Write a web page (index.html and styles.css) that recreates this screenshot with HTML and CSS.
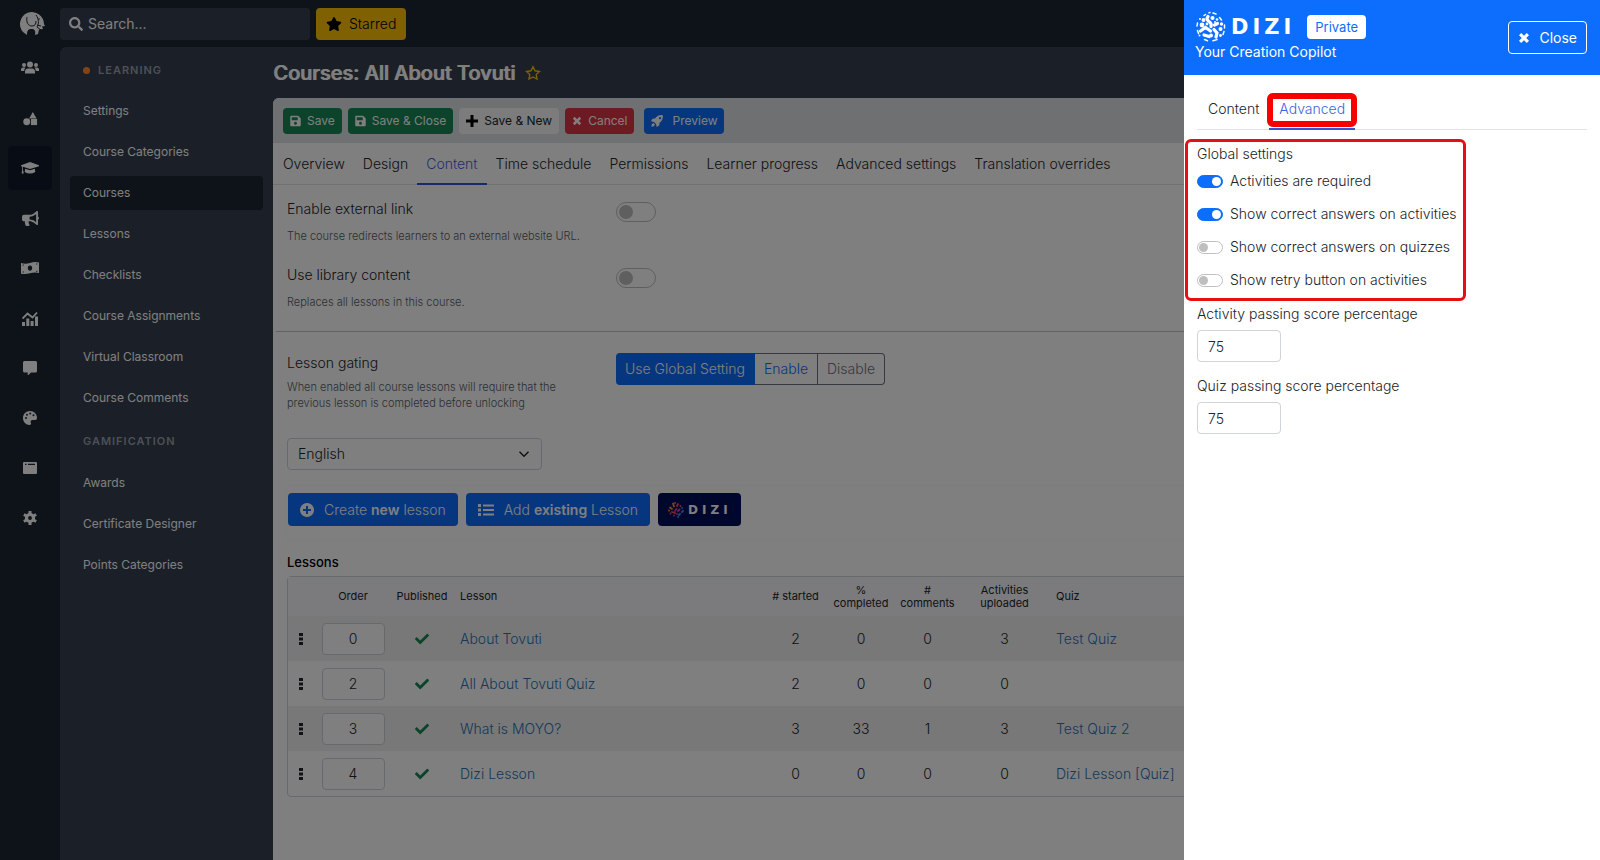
FILE: index.html
```
<!DOCTYPE html>
<html lang="en">

<head>
  <meta charset="UTF-8" />
  <meta name="viewport" content="width=device-width, initial-scale=1.0" />
  <title>Courses: All About Tovuti</title>
  <link rel="stylesheet" href="styles.css">
</head>

<body>
  <!-- Shared icons -->
  <svg class="sprite" aria-hidden="true">
    <symbol id="i-save" viewBox="0 0 448 512"><path d="M433.941 129.941l-83.882-83.882A48 48 0 0 0 316.118 32H48C21.49 32 0 53.49 0 80v352c0 26.51 21.49 48 48 48h352c26.51 0 48-21.49 48-48V163.882a48 48 0 0 0-14.059-33.941zM224 416c-35.346 0-64-28.654-64-64 0-35.346 28.654-64 64-64s64 28.654 64 64c0 35.346-28.654 64-64 64zm96-304.52V212c0 6.627-5.373 12-12 12H76c-6.627 0-12-5.373-12-12V108c0-6.627 5.373-12 12-12h228.52c3.183 0 6.235 1.264 8.485 3.515l3.48 3.48A11.996 11.996 0 0 1 320 111.48z"/></symbol>
    <symbol id="i-check" viewBox="0 0 512 512"><path d="M173.898 439.404l-166.4-166.4c-9.997-9.997-9.997-26.206 0-36.204l36.203-36.204c9.997-9.998 26.207-9.998 36.204 0L192 312.69 432.095 72.596c9.997-9.997 26.207-9.997 36.204 0l36.203 36.204c9.997 9.997 9.997 26.206 0 36.204l-294.4 294.401c-9.998 9.997-26.207 9.997-36.204-.001z"/></symbol>
    <symbol id="i-times" viewBox="0 0 12 12"><path d="M3.2 1L6 3.8 8.800 1 11 3.200 8.200 6 11 8.800 8.800 11 6 8.200 3.200 11 1 8.800 3.800 6 1 3.200z"/></symbol>
    <symbol id="i-star" viewBox="0 0 576 512"><path d="M259.3 17.8L194 150.2 47.9 171.5c-26.2 3.8-36.7 36.1-17.7 54.6l105.7 103-25 145.5c-4.5 26.3 23.2 46 46.4 33.7L288 439.6l130.7 68.700c23.2 12.2 50.9-7.4 46.4-33.7l-25-145.5 105.700-103c19-18.5 8.5-50.8-17.7-54.600L382 150.2 316.7 17.8c-11.7-23.6-45.6-23.9-57.4 0z"/></symbol>
    <symbol id="i-grip" viewBox="0 0 4 12"><rect width="4" height="3"/><rect y="4.500" width="4" height="3"/><rect y="9" width="4" height="3"/></symbol>
    <symbol id="i-globe" viewBox="0 0 32 32">
      <g fill="none" stroke="currentColor" stroke-linecap="round">
        <path stroke-width="3.200" d="M13 5.500q-2 3 1 5t2 5M5.500 20l5-3.500 5 3.500M19 18.500l3 3.500-1 4M22.500 12.500l-3 1.500M9 24l5 1.500"/>
        <path stroke-width="1.500" d="M9 4.500l1.500-1M18 2l3 1M24.500 6.500l2 2.500M29.500 14v3M29 20.500l-1 3M2.500 12l-.5 3M2.500 19.500l1 3M18 29.800l4-1.200M9.500 28.500l3 1.200M14 1.800l1-.2"/>
      </g>
      <circle cx="17.500" cy="7" r="2"/><circle cx="22" cy="8.500" r="1.300"/><circle cx="26.500" cy="13" r="1.700"/>
      <circle cx="8.500" cy="9" r="2"/><circle cx="7" cy="14" r="2.400"/><circle cx="12" cy="13" r="1.400"/>
      <circle cx="25.500" cy="18" r="2"/><circle cx="16" cy="24.500" r="2"/><circle cx="25.500" cy="24.500" r="1.400"/>
      <circle cx="5" cy="8" r="1"/><circle cx="4.500" cy="24.500" r="1"/><circle cx="20" cy="11" r="1"/>
    </symbol>
  </svg>

  <div class="app">
    <!-- Icon rail -->
    <nav class="rail" aria-label="Main">
      <a class="brand" href="#" aria-label="Home">
        <svg viewBox="0 0 26 26" width="26" height="26">
          <path d="M4 22A12 12 0 1 1 25 14l1 2-3 .5 1 2.500-4 .5-1 4.500-3 1c1-5-1-6-4-6s-4 2-4 6z"/>
          <path d="M8 7c-1 5 1 9 5 9 3 0 4-2 4-5M17 5c3 4 3 9 1 12l4 3M18 15l4 1" fill="none" stroke="#1c2634" stroke-width="1"/>
          <circle cx="20" cy="9" r=".8" fill="#1c2634"/>
        </svg>
      </a>
      <a class="rail-link" href="#" aria-label="Users">
        <svg viewBox="0 0 18 14" width="18" height="14"><circle cx="9" cy="3.500" r="3"/><path d="M4 12.500V11q0-3.500 3-3.500h4q3 0 3 3.500v1.500z"/><circle cx="3" cy="4" r="2"/><circle cx="15" cy="4" r="2"/><path d="M0 10V8.500Q0 6.600 2 6.600h2.500Q3.300 8 3.200 10zM18 10V8.500q0-1.900-2-1.900h-2.500q1.200 1.400 1.300 3.400z"/></svg>
      </a>
      <a class="rail-link" href="#" aria-label="Shapes">
        <svg viewBox="0 0 16 16" width="15" height="15"><path d="M10.500 1l4 7h-8z"/><circle cx="4" cy="11.500" r="3.700"/><rect x="8.500" y="8.500" width="6.500" height="6.500"/></svg>
      </a>
      <a class="rail-link active" href="#" aria-label="Learning">
        <svg viewBox="0 0 18 14" width="18" height="14"><path d="M9 1l9 3.200v1L9 8 2 5.800v3l.8 3.700H.6l.6-3.700V5.500L0 5.200v-1z"/><path d="M4.200 7.800L9 9.300l4.800-1.500.5 3.200q-5.300 3.200-10.600 0z"/></svg>
      </a>
      <a class="rail-link" href="#" aria-label="Announcements">
        <svg viewBox="0 0 576 512" width="17" height="15"><path d="M576 240c0-23.630-12.950-44.040-32-55.120V32.010C544 23.260 537.020 0 512 0c-7.120 0-14.190 2.380-19.980 7.020l-85.030 68.030C364.280 109.190 310.660 128 256 128H64c-35.350 0-64 28.650-64 64v96c0 35.350 28.650 64 64 64h33.700c-1.390 10.480-2.180 21.140-2.180 32 0 39.770 9.260 77.350 25.560 110.940 5.190 10.690 16.520 17.060 28.400 17.060h74.280c26.050 0 41.690-29.840 25.900-50.560-16.400-21.520-26.150-48.360-26.150-77.440 0-11.110 1.620-21.790 4.410-32H256c54.660 0 108.280 18.810 150.980 52.950l85.030 68.030a32.023 32.023 0 0 0 19.980 7.020c24.920 0 32-22.780 32-32V295.130C563.050 284.040 576 263.630 576 240zm-96 141.420l-33.050-26.440C392.950 311.780 325.120 288 256 288v-96c69.120 0 136.950-23.780 190.950-66.980L480 98.580v282.840z"/></svg>
      </a>
      <a class="rail-link" href="#" aria-label="Commerce">
        <svg viewBox="0 0 18 14" width="18" height="14"><path fill-rule="evenodd" d="M0 2q4.500 1.500 9 0t9-.5v10.500q-4.500-1-9 .3t-9 .4zM9 4.500c-1.500 0-2.200 1.200-2.200 2.600S7.500 9.700 9 9.700s2.200-1.200 2.200-2.600S10.500 4.500 9 4.500z"/><path d="M1.500 4.500l1.500-.8M15 3h1.500M1.500 11h1.500M15 10.500l1.500-.3" stroke="#1c2634" stroke-width=".8"/></svg>
      </a>
      <a class="rail-link" href="#" aria-label="Reports">
        <svg viewBox="0 0 16 15" width="16" height="15"><path d="M0 11h3v4H0zM4.300 7.500h3V15h-3zM8.600 10h3v5h-3zM13 5.500h3V15h-3z"/><path d="M.5 7.500l5-5 5 4 4.500-5" fill="none" stroke="currentColor" stroke-width="1.800"/></svg>
      </a>
      <a class="rail-link" href="#" aria-label="Messages">
        <svg viewBox="0 0 14 14" width="14" height="14"><path d="M1.500 0h11Q14 0 14 1.500v8.500q0 1.500-1.500 1.500H8L5.500 14h-.8v-2.500H1.500Q0 11.500 0 10V1.500Q0 0 1.500 0z"/></svg>
      </a>
      <a class="rail-link" href="#" aria-label="Design">
        <svg viewBox="0 0 14 14" width="14" height="14"><path fill-rule="evenodd" d="M7 0C3 0 0 3.200 0 7s3 7 6.500 7c1.500 0 1.800-1 1.300-2.200C7.200 10.300 8 9 9.500 9H12c1.300 0 2-.9 2-2 0-4-3-7-7-7zM2 7a1 1 0 1 0 2 0 1 1 0 1 0-2 0zM3 3.800a1 1 0 1 0 2 0 1 1 0 1 0-2 0zM6.200 2.500a1 1 0 1 0 2 0 1 1 0 1 0-2 0zM9.500 4.200a1 1 0 1 0 2 0 1 1 0 1 0-2 0z"/></svg>
      </a>
      <a class="rail-link" href="#" aria-label="Pages">
        <svg viewBox="0 0 14 12" width="14" height="12"><path fill-rule="evenodd" d="M1 0h12q1 0 1 1v10q0 1-1 1H1q-1 0-1-1V1q0-1 1-1zM2 1.800V3h1.500V1.800zM5 1.800V3h7V1.800z"/></svg>
      </a>
      <a class="rail-link" href="#" aria-label="Configuration">
        <svg viewBox="0 0 14 14" width="14" height="14"><circle cx="7" cy="7" r="3.500" fill="none" stroke="currentColor" stroke-width="3.200"/><path d="M7 0v3M7 11v3M.9 3.500l2.600 1.500M10.500 9l2.600 1.500M.9 10.500L3.500 9M10.500 5l2.600-1.500" stroke="currentColor" stroke-width="3"/></svg>
      </a>
    </nav>

    <div class="page">
      <!-- Top bar -->
      <header class="topbar">
        <label class="search">
          <svg viewBox="0 0 512 512" width="14" height="14"><path d="M505 442.700L405.300 343c-4.500-4.500-10.600-7-17-7H372c27.600-35.300 44-79.700 44-128C416 93.100 322.900 0 208 0S0 93.100 0 208s93.100 208 208 208c48.300 0 92.700-16.400 128-44v16.300c0 6.400 2.500 12.500 7 17l99.700 99.700c9.400 9.400 24.600 9.400 33.900 0l28.300-28.300c9.400-9.400 9.400-24.600.1-34zM208 336c-70.700 0-128-57.200-128-128 0-70.700 57.200-128 128-128 70.700 0 128 57.200 128 128 0 70.700-57.200 128-128 128z"/></svg>
          <input type="text" placeholder="Search..." aria-label="Search" />
        </label>
        <button class="btn btn-starred" type="button">
          <svg width="16" height="14"><use href="#i-star"/></svg>
          Starred
        </button>
      </header>

      <div class="workspace">
        <!-- Sidebar -->
        <aside class="sidebar">
          <h2 class="side-title"><span class="dot"></span>Learning</h2>
          <a class="side-link" href="#">Settings</a>
          <a class="side-link" href="#">Course Categories</a>
          <a class="side-link active" href="#">Courses</a>
          <a class="side-link" href="#">Lessons</a>
          <a class="side-link" href="#">Checklists</a>
          <a class="side-link" href="#">Course Assignments</a>
          <a class="side-link" href="#">Virtual Classroom</a>
          <a class="side-link" href="#">Course Comments</a>
          <h2 class="side-title muted">Gamification</h2>
          <a class="side-link" href="#">Awards</a>
          <a class="side-link" href="#">Certificate Designer</a>
          <a class="side-link" href="#">Points Categories</a>
        </aside>

        <main class="main">
          <div class="page-title">
            <h1>Courses: All About Tovuti</h1>
            <svg viewBox="-40 -40 656 592" width="16" height="15"><path class="star-outline" d="M288 20l82 166 184 27-133 129 31 182-164-86-164 86 31-182L22 213l184-27z"/></svg>
          </div>

          <div class="card">
            <div class="toolbar">
              <button class="btn btn-success" type="button"><svg width="11" height="12"><use href="#i-save"/></svg>Save</button>
              <button class="btn btn-success" type="button"><svg width="11" height="12"><use href="#i-save"/></svg>Save &amp; Close</button>
              <button class="btn btn-light" type="button"><svg viewBox="0 0 12 12" width="12" height="12"><path d="M4.500 0h3v4.500H12v3H7.500V12h-3V7.500H0v-3h4.500z"/></svg>Save &amp; New</button>
              <button class="btn btn-danger" type="button"><svg width="10" height="10"><use href="#i-times"/></svg>Cancel</button>
              <button class="btn btn-primary preview" type="button"><svg viewBox="0 0 12 12" width="12" height="12"><path fill-rule="evenodd" d="M11.800.2Q12.500 4.800 8.500 8L8.200 10.500 5.700 12 5 9 3 7 0 6.300 1.500 3.800 4 3.500Q7.200-.5 11.800.2zM9 2a1.100 1.100 0 1 0 .1 0z"/><path d="M.3 11.700Q.3 8.500 2.300 8l1.700 1.700q-.5 2-3.700 2z"/></svg>Preview</button>
            </div>

            <nav class="tabs">
              <a href="#">Overview</a>
              <a href="#">Design</a>
              <a class="active" href="#">Content</a>
              <a href="#">Time schedule</a>
              <a href="#">Permissions</a>
              <a href="#">Learner progress</a>
              <a href="#">Advanced settings</a>
              <a href="#">Translation overrides</a>
            </nav>

            <div class="card-body">
              <div class="setting">
                <div class="setting-text">
                  <label for="external-link">Enable external link</label>
                  <p>The course redirects learners to an external website URL.</p>
                </div>
                <input class="switch switch-lg" id="external-link" type="checkbox" />
              </div>
              <div class="setting">
                <div class="setting-text">
                  <label for="library-content">Use library content</label>
                  <p>Replaces all lessons in this course.</p>
                </div>
                <input class="switch switch-lg" id="library-content" type="checkbox" />
              </div>
              <hr>
              <div class="setting gating">
                <div class="setting-text">
                  <span>Lesson gating</span>
                  <p>When enabled all course lessons will require that the previous lesson is completed before unlocking</p>
                </div>
                <div class="btn-group" role="group" aria-label="Lesson gating">
                  <button class="selected" type="button">Use Global Setting</button>
                  <button class="enable" type="button">Enable</button>
                  <button type="button">Disable</button>
                </div>
              </div>

              <div class="language">
                <select aria-label="Language">
                  <option>English</option>
                </select>
                <svg viewBox="0 0 16 16" width="12" height="12"><path d="M2 5l6 6 6-6" fill="none" stroke="currentColor" stroke-width="2"/></svg>
              </div>

              <div class="lesson-actions">
                <button class="btn btn-primary btn-lg" type="button">
                  <svg viewBox="0 0 14 14" width="14" height="14"><path fill-rule="evenodd" d="M7 0a7 7 0 1 0 .01 0zM6 3h2v3h3v2H8v3H6V8H3V6h3z"/></svg>
                  <span>Create <b>new</b> lesson</span>
                </button>
                <button class="btn btn-primary btn-lg" type="button">
                  <svg viewBox="0 0 16 14" width="16" height="14"><path d="M0 1h3v3H0zM0 5.500h3v3H0zM0 10h3v3H0zM5 1.500h11v2H5zM5 6h11v2H5zM5 10.500h11v2H5z"/></svg>
                  <span>Add <b>existing</b> Lesson</span>
                </button>
                <button class="btn btn-dizi" type="button">
                  <svg viewBox="0 0 18 18" width="18" height="18">
                    <g stroke-width="1.800" stroke-linecap="round" fill="none">
                      <path d="M6 2.500l1 3M3 6.500l2 1.500M8 2v.1M2 9.500h.1" stroke="#ff8a30"/>
                      <path d="M11 3l-1 2M13.500 5v.1M5 11l3 1M3.500 12.500v.1" stroke="#ff4d5a"/>
                      <path d="M9.500 8l-1.500 2M12.500 8.500l-1.500 1.500M10 13v.1M7 14.500v.1" stroke="#e040a0"/>
                      <path d="M15 7v.1M16 10l-1 1M13 13l-1 1M11 16v.1" stroke="#4c8dff"/>
                    </g>
                  </svg>
                  <span class="wordmark">DIZI</span>
                </button>
              </div>

              <h3>Lessons</h3>
              <table class="lessons">
                <colgroup>
                  <col class="c-grip"><col class="c-order"><col class="c-published"><col class="c-lesson"><col class="c-started"><col class="c-completed"><col class="c-comments"><col class="c-uploaded"><col>
                </colgroup>
                <thead>
                  <tr>
                    <th></th>
                    <th>Order</th>
                    <th>Published</th>
                    <th class="left">Lesson</th>
                    <th># started</th>
                    <th>% completed</th>
                    <th># comments</th>
                    <th>Activities uploaded</th>
                    <th class="left">Quiz</th>
                  </tr>
                </thead>
                <tbody>
                  <tr>
                    <td><svg width="4" height="12"><use href="#i-grip"/></svg></td>
                    <td><input type="text" value="0" aria-label="Order of About Tovuti" /></td>
                    <td><svg class="check" width="14" height="14"><use href="#i-check"/></svg></td>
                    <td class="left"><a href="#">About Tovuti</a></td>
                    <td>2</td><td>0</td><td>0</td><td>3</td>
                    <td class="left"><a href="#">Test Quiz</a></td>
                  </tr>
                  <tr>
                    <td><svg width="4" height="12"><use href="#i-grip"/></svg></td>
                    <td><input type="text" value="2" aria-label="Order of All About Tovuti Quiz" /></td>
                    <td><svg class="check" width="14" height="14"><use href="#i-check"/></svg></td>
                    <td class="left"><a href="#">All About Tovuti Quiz</a></td>
                    <td>2</td><td>0</td><td>0</td><td>0</td>
                    <td></td>
                  </tr>
                  <tr>
                    <td><svg width="4" height="12"><use href="#i-grip"/></svg></td>
                    <td><input type="text" value="3" aria-label="Order of What is MOYO?" /></td>
                    <td><svg class="check" width="14" height="14"><use href="#i-check"/></svg></td>
                    <td class="left"><a href="#">What is MOYO?</a></td>
                    <td>3</td><td>33</td><td>1</td><td>3</td>
                    <td class="left"><a href="#">Test Quiz 2</a></td>
                  </tr>
                  <tr>
                    <td><svg width="4" height="12"><use href="#i-grip"/></svg></td>
                    <td><input type="text" value="4" aria-label="Order of Dizi Lesson" /></td>
                    <td><svg class="check" width="14" height="14"><use href="#i-check"/></svg></td>
                    <td class="left"><a href="#">Dizi Lesson</a></td>
                    <td>0</td><td>0</td><td>0</td><td>0</td>
                    <td class="left"><a href="#">Dizi Lesson [Quiz]</a></td>
                  </tr>
                </tbody>
              </table>
            </div>
          </div>
        </main>
      </div>
    </div>
  </div>

  <div class="backdrop"></div>

  <!-- Dizi panel -->
  <section class="panel" aria-label="Dizi">
    <header class="panel-header">
      <div>
        <div class="panel-brand">
          <svg width="32" height="32"><use href="#i-globe"/></svg>
          <span class="wordmark">DIZI</span>
          <span class="badge">Private</span>
        </div>
        <p>Your Creation Copilot</p>
      </div>
      <button class="btn-close" type="button"><svg width="12" height="12"><use href="#i-times"/></svg>Close</button>
    </header>

    <div class="panel-body">
      <nav class="tabs panel-tabs">
        <a href="#">Content</a>
        <a class="active marked" href="#">Advanced</a>
      </nav>

      <div class="global-settings">
        <h3>Global settings</h3>
        <label><input class="switch" type="checkbox" checked />Activities are required</label>
        <label><input class="switch" type="checkbox" checked />Show correct answers on activities</label>
        <label><input class="switch" type="checkbox" />Show correct answers on quizzes</label>
        <label><input class="switch" type="checkbox" />Show retry button on activities</label>
      </div>

      <div class="field">
        <label for="activity-score">Activity passing score percentage</label>
        <input id="activity-score" type="text" value="75" />
      </div>
      <div class="field">
        <label for="quiz-score">Quiz passing score percentage</label>
        <input id="quiz-score" type="text" value="75" />
      </div>
    </div>
  </section>
</body>

</html>
```
FILE: styles.css
```
/* Base */
* {
  box-sizing: border-box;
  margin: 0;
  padding: 0;
}

body {
  font-family: Inter, sans-serif;
  font-size: 14px;
  font-weight: 300;
  line-height: 20px;
  color: #212529;
  background-color: #1c2634;
}

button,
input,
select {
  font: inherit;
  color: inherit;
}

button {
  cursor: pointer;
}

a {
  color: inherit;
  text-decoration: none;
}

svg {
  display: block;
  flex: none;
  fill: currentColor;
}

.sprite {
  position: absolute;
  width: 0;
  height: 0;
}

.app {
  display: flex;
  min-height: 100vh;
}

/* Icon rail */
.rail {
  width: 60px;
  flex: none;
  display: flex;
  flex-direction: column;
  align-items: center;
  gap: 6px;
  color: #fff;
}

.brand {
  padding: 10px 0 4px 4px;
}

.rail-link {
  width: 44px;
  height: 44px;
  display: flex;
  align-items: center;
  justify-content: center;
  border-radius: 4px;
}

.rail-link.active {
  background-color: #101a2a;
}

/* Top bar */
.page {
  flex: 1;
  min-width: 0;
  display: flex;
  flex-direction: column;
}

.topbar {
  height: 47px;
  display: flex;
  align-items: center;
  gap: 6px;
}

.search {
  width: 250px;
  height: 32px;
  display: flex;
  align-items: center;
  gap: 5px;
  padding: 0 9px;
  border-radius: 4px;
  background-color: #363e4e;
  color: #fff;
}

.search input {
  flex: 1;
  min-width: 0;
  border: none;
  outline: none;
  background: none;
  font-weight: 400;
}

.search input::placeholder {
  color: #fff;
  opacity: 1;
}

/* Buttons */
.btn {
  display: flex;
  align-items: center;
  gap: 6px;
  height: 26px;
  padding: 0 7px;
  border: none;
  border-radius: 4px;
  font-size: 12px;
  font-weight: 400;
  color: #fff;
}

.btn-starred {
  height: 32px;
  padding: 0 10px;
  gap: 7px;
  font-size: 14px;
  font-weight: 300;
  color: #000;
  background-color: #ffc107;
}

.btn-success {
  background-color: #198754;
}

.btn-light {
  background-color: #f8f9fa;
  color: #212529;
}

.btn-light svg {
  fill: #000;
}

.btn-danger {
  background-color: #dc3545;
}

.btn-primary {
  background-color: #0d6efd;
}

.btn-lg {
  height: 33px;
  padding: 0 12px;
  gap: 10px;
  font-size: 14px;
  font-weight: 300;
}

.btn-lg b {
  font-weight: 600;
}

.preview {
  margin-left: 4px;
  gap: 9px;
}

.btn-dizi {
  height: 33px;
  padding: 0 9px;
  gap: 3px;
  background-color: #000f59;
}

.wordmark {
  font-family: "DejaVu Sans", sans-serif;
  font-size: 12px;
  font-weight: 700;
  letter-spacing: 4px;
}

/* Sidebar */
.workspace {
  flex: 1;
  display: flex;
  border-top-left-radius: 6px;
  background-color: #363e4e;
}

.sidebar {
  width: 213px;
  flex: none;
  padding: 13px 10px;
  display: flex;
  flex-direction: column;
  gap: 7px;
  color: #fff;
}

.side-title {
  display: flex;
  align-items: center;
  gap: 8px;
  padding: 0 13px;
  margin-bottom: 7px;
  font-size: 11px;
  font-weight: 600;
  letter-spacing: 1px;
  text-transform: uppercase;
  color: #9ba1ab;
}

.side-title.muted {
  margin: 9px 0 8px;
}

.dot {
  width: 7px;
  height: 7px;
  border-radius: 50%;
  background-color: #ff8a30;
}

.side-link {
  padding: 7px 13px;
  border-radius: 4px;
  font-size: 12px;
  font-weight: 400;
}

.side-link.active {
  background-color: #1c2634;
}

/* Main */
.main {
  flex: 1;
  min-width: 0;
  display: flex;
  flex-direction: column;
}

.page-title {
  height: 51px;
  display: flex;
  align-items: center;
  gap: 10px;
  color: #fff;
}

.page-title h1 {
  font-size: 20px;
  font-weight: 500;
  line-height: 28px;
  text-shadow: 1px 0 0 #fff;
}

.star-outline {
  fill: none;
  stroke: #ffc107;
  stroke-width: 56px;
}

.card {
  flex: 1;
  border-top-left-radius: 6px;
  background-color: #fff;
  overflow: hidden;
}

.toolbar {
  height: 45px;
  display: flex;
  align-items: center;
  gap: 6px;
  padding: 0 10px;
  background-color: #dee1e5;
}

/* Tabs */
.tabs {
  display: flex;
  padding: 0 1px;
  border-bottom: 1px solid #dee2e6;
}

.tabs a {
  padding: 11px 9px 9px;
  margin-bottom: -1px;
  border-bottom: 2px solid transparent;
}

.tabs a.active {
  color: #3f5fe0;
  border-bottom-color: #2f55d8;
}

/* Course settings */
.card-body {
  padding: 14px;
}

.setting {
  display: flex;
  align-items: flex-start;
  margin-bottom: 21px;
}

.setting-text {
  width: 329px;
  flex: none;
  padding-right: 36px;
}

.setting-text p {
  margin-top: 9px;
  font-size: 11px;
  line-height: 16px;
  color: #565e66;
}

.gating p {
  margin-top: 6px;
}

hr {
  margin: 21px -14px 21px -11px;
  border: none;
  border-top: 1px solid #c4c7ca;
}

/* Switches */
.switch {
  appearance: none;
  width: 26px;
  height: 13px;
  flex: none;
  padding: 1px;
  border: 1px solid #bfbfbf;
  border-radius: 10px;
  background-color: #fff;
  cursor: pointer;
}

.switch::before {
  content: "";
  display: block;
  width: 9px;
  height: 9px;
  border-radius: 50%;
  background-color: #bfbfbf;
}

.switch:checked {
  border-color: #0d6efd;
  background-color: #0d6efd;
}

.switch:checked::before {
  margin-left: auto;
  background-color: #fff;
}

.switch-lg {
  width: 40px;
  height: 20px;
  margin-top: 3px;
  padding: 2px;
}

.switch-lg::before {
  width: 14px;
  height: 14px;
}

/* Lesson gating buttons */
.btn-group {
  display: flex;
}

.btn-group button {
  height: 32px;
  padding: 0 9px;
  border: 1px solid #6c757d;
  border-left: none;
  background-color: #fff;
  color: #6c757d;
}

.btn-group button:last-child {
  border-radius: 0 4px 4px 0;
}

.btn-group .enable {
  color: #0d6efd;
}

.btn-group .selected {
  border-color: #0d6efd;
  border-radius: 4px 0 0 4px;
  background-color: #0d6efd;
  color: #fff;
}

/* Language */
.language {
  position: relative;
  width: 255px;
  margin-top: 27px;
}

.language select {
  display: block;
  appearance: none;
  width: 100%;
  height: 32px;
  padding: 0 10px;
  border: 1px solid #ced4da;
  border-radius: 4px;
  background-color: #fff;
}

.language svg {
  position: absolute;
  top: 10px;
  right: 12px;
  pointer-events: none;
}

.lesson-actions {
  display: flex;
  gap: 8px;
  margin: 15px 0 11px -1px;
  padding: 7px 0 14px 1px;
  border: 1px solid #fafafa;
}

.card-body h3 {
  font-size: 13px;
  font-weight: 500;
  color: #000;
}

/* Lessons table */
.lessons {
  width: 100%;
  margin-top: 4px;
  table-layout: fixed;
  border-spacing: 0;
  border: 1px solid #ced4da;
  border-radius: 4px;
}

.c-grip { width: 26px; }
.c-order { width: 78px; }
.c-published { width: 60px; }
.c-lesson { width: 311px; }
.c-started { width: 65px; }
.c-completed { width: 66px; }
.c-comments { width: 67px; }
.c-uploaded { width: 87px; }

.lessons th {
  height: 39px;
  padding: 0 3px;
  font-size: 11px;
  font-weight: 400;
  line-height: 13px;
  background-color: #f6f6fb;
}

.lessons td {
  height: 45px;
  text-align: center;
}

.lessons .left {
  padding-left: 8px;
  text-align: left;
}

.lessons tbody tr:nth-child(odd) {
  background-color: #f0f0f0;
}

.lessons td svg {
  margin: 0 auto;
}

.lessons td input {
  display: block;
  width: 63px;
  height: 32px;
  margin: 0 auto;
  border: 1px solid #ced4da;
  border-radius: 4px;
  background-color: #fff;
  text-align: center;
}

.lessons a {
  color: #2a72b5;
}

.check {
  color: #198754;
}

/* Backdrop */
.backdrop {
  position: fixed;
  inset: 0;
  background-color: rgba(0, 0, 0, 0.5);
}

/* Panel */
.panel {
  position: fixed;
  top: 0;
  right: 0;
  bottom: 0;
  width: 26%;
  min-width: 380px;
  background-color: #fff;
}

.panel-header {
  display: flex;
  align-items: center;
  justify-content: space-between;
  height: 75px;
  padding: 0 13px 0 11px;
  background-color: #0d6efd;
  color: #fff;
  font-weight: 400;
}

.panel-header p {
  margin-bottom: 3px;
  line-height: 18px;
}

.panel-brand {
  display: flex;
  align-items: center;
  gap: 4px;
}

.panel-brand .wordmark {
  font-size: 21px;
}

.badge {
  margin-left: 8px;
  padding: 2px 8px;
  border-radius: 4px;
  background-color: #fff;
  color: #0d6efd;
  font-size: 13px;
}

.btn-close {
  display: flex;
  align-items: center;
  gap: 9px;
  height: 33px;
  padding: 0 9px;
  border: 1px solid #fff;
  border-radius: 4px;
  background: none;
}

.panel-body {
  padding: 13px;
}

.panel-tabs {
  margin-bottom: 9px;
}

.panel-tabs a {
  padding-left: 10px;
  padding-right: 10px;
}

/* Red markers round the tab and the settings group */
.marked {
  position: relative;
}

.marked::after {
  content: "";
  position: absolute;
  inset: 5px -2px 1px -2px;
  border: 6px solid #f80000;
  border-radius: 6px;
}

.global-settings {
  width: fit-content;
  margin-left: -12px;
  padding: 2px 6px 8px 9px;
  display: flex;
  flex-direction: column;
  gap: 13px;
  border: 3px solid #e60f14;
  border-radius: 6px;
}

.global-settings h3 {
  margin-bottom: -6px;
  font-size: 14px;
  font-weight: 300;
}

.global-settings label {
  display: flex;
  align-items: center;
  gap: 7px;
}

.field {
  margin: 3px 0 14px;
}

.field label {
  display: block;
  margin-bottom: 6px;
}

.field input {
  display: block;
  width: 84px;
  height: 32px;
  padding: 0 10px;
  border: 1px solid #ced4da;
  border-radius: 4px;
}
```
